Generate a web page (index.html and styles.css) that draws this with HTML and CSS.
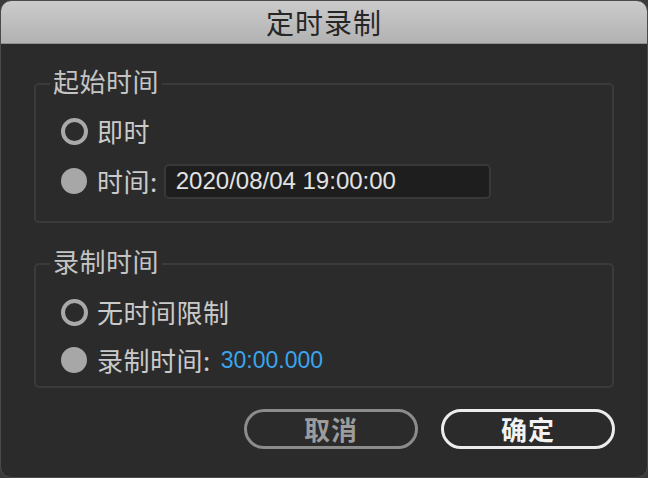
FILE: index.html
```html
<!DOCTYPE html>
<html lang="zh-CN">
<head>
<meta charset="utf-8">
<title>定时录制</title>
<link rel="stylesheet" href="styles.css">
</head>
<body>
<div class="dialog">
  <div class="titlebar">定时录制</div>
  <div class="content">
    <fieldset class="group group-start">
      <legend class="legend">起始时间</legend>
      <div class="row">
        <span class="radio-slot"><span class="radio"></span></span>
        <span class="label">即时</span>
      </div>
      <div class="row">
        <span class="radio-slot"><span class="radio radio-filled"></span></span>
        <span class="label">时间:</span>
        <div class="input">2020/08/04 19:00:00</div>
      </div>
    </fieldset>
    <fieldset class="group group-rec">
      <legend class="legend">录制时间</legend>
      <div class="row row-rec">
        <span class="radio-slot"><span class="radio"></span></span>
        <span class="label">无时间限制</span>
      </div>
      <div class="row row-rec">
        <span class="radio-slot"><span class="radio radio-filled"></span></span>
        <span class="label">录制时间:</span>
        <span class="value">30:00.000</span>
      </div>
    </fieldset>
    <div class="buttons">
      <button class="btn btn-cancel">取消</button>
      <button class="btn btn-ok">确定</button>
    </div>
  </div>
</div>
</body>
</html>
```
FILE: styles.css
```css
html, body {
  margin: 0;
  padding: 0;
}
body {
  width: 648px;
  height: 478px;
  background: #3a3a3a;
  font-family: "Noto Sans CJK SC", "Noto Sans", sans-serif;
  overflow: hidden;
}
.dialog {
  width: 648px;
  height: 478px;
  box-sizing: border-box;
  border: 1px solid #4a4a4a;
  border-radius: 11px;
  overflow: hidden;
  background: #2b2b2b;
}
.titlebar {
  height: 42px;
  background: linear-gradient(#cbcbcb, #b2b2b2);
  border-bottom: 1px solid #8f8f8f;
  display: flex;
  align-items: center;
  justify-content: center;
  color: #262626;
  font-size: 28px;
  line-height: 28px;
  letter-spacing: 1px;
}
.content {
  padding: 0 33px;
}
.group {
  margin: 0;
  border: 2px solid #3b3b3b;
  border-radius: 5px;
  padding: 0 0 0 24px;
  min-width: 0;
}
.group-start {
  margin-top: 24px;
  padding-top: 6px;
  padding-bottom: 15px;
}
.group-rec {
  margin-top: 25px;
  padding-top: 8px;
  padding-bottom: 2px;
}
.legend {
  color: #c4c4c4;
  font-size: 26px;
  line-height: 26px;
  padding: 0 3px 6px 3px;
  margin-left: -10px;
  letter-spacing: 0.5px;
}
.row {
  height: 50px;
  display: flex;
  align-items: center;
}
.row-rec {
  height: 48px;
}
.radio-slot {
  width: 28px;
  height: 28px;
  display: flex;
  align-items: center;
  justify-content: center;
  margin-right: 9px;
}
.radio {
  width: 27px;
  height: 27px;
  box-sizing: border-box;
  border: 4px solid #a9a9a9;
  border-radius: 50%;
}
.radio-filled {
  width: 26px;
  height: 26px;
  border: none;
  background: #a7a7a7;
}
.label {
  color: #cacaca;
  font-size: 26px;
  line-height: 30px;
  letter-spacing: 0.5px;
}
.input {
  margin-left: 6px;
  width: 327px;
  height: 35px;
  box-sizing: border-box;
  background: #1e1e1e;
  border: 2px solid #383838;
  border-radius: 5px;
  padding-left: 10px;
  display: flex;
  align-items: center;
  color: #e2e2e2;
  font-family: "Liberation Sans", Arial, sans-serif;
  font-size: 24px;
}
.value {
  margin-left: 10px;
  color: #3aa4ee;
  font-family: "Liberation Sans", Arial, sans-serif;
  font-size: 23px;
}
.buttons {
  margin-top: 21px;
  display: flex;
  justify-content: flex-end;
  gap: 23px;
  margin-right: -1px;
}
.btn {
  width: 174px;
  height: 40px;
  box-sizing: border-box;
  border-radius: 20px;
  background: transparent;
  font-family: "Noto Sans CJK SC", sans-serif;
  font-size: 26px;
  font-weight: 700;
  line-height: 30px;
  padding: 0;
  letter-spacing: 1px;
}
.btn-cancel {
  border: 3px solid #8c8c8c;
  color: #9c9c9c;
}
.btn-ok {
  border: 3px solid #ececec;
  color: #f2f2f2;
}
```
